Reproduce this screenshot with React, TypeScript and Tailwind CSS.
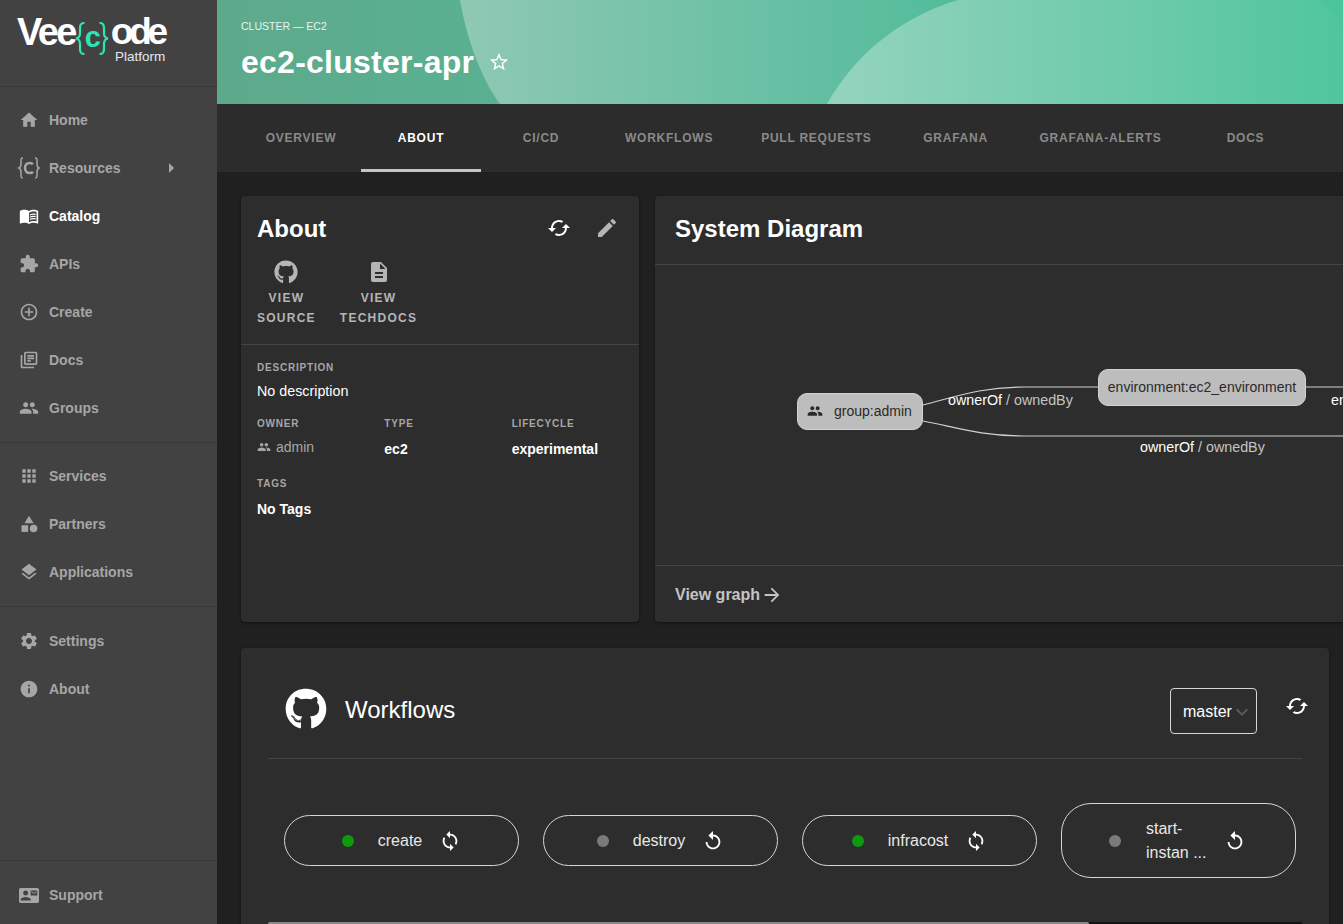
import type { ReactNode } from "react";
import { FaGithub } from "react-icons/fa";
import {
  MdAddCircleOutline,
  MdApps,
  MdArrowForward,
  MdArrowRight,
  MdCached,
  MdCategory,
  MdContactMail,
  MdDescription,
  MdEdit,
  MdExpandMore,
  MdExtension,
  MdHome,
  MdInfo,
  MdLayers,
  MdMenuBook,
  MdOutlineLibraryBooks,
  MdPeople,
  MdReplay,
  MdSettings,
  MdStarBorder,
  MdSync,
} from "react-icons/md";

const FONT = "font-['Liberation_Sans',Arial,sans-serif]";

function ResourcesIcon() {
  return (
    <svg viewBox="0 0 24 24" className="ml-[-2px] mr-[-2px] h-6 w-6 shrink-0" fill="none" stroke="currentColor" strokeWidth="1.5">
      <path d="M6 2C3.5 2 4 4 4 7s.2 4-2 5c2.2 1 2 2 2 5s-.5 5 2 5" />
      <path d="M18 2c2.5 0 2 2 2 5s-.2 4 2 5c-2.2 1-2 2-2 5s.5 5-2 5" />
      <path d="M16 8.2C15 7.2 13.8 7 12.6 7 9.800 7 8 9.200 8 12s1.800 5 4.600 5c1.200 0 2.400-.2 3.400-1.200" strokeWidth="2.600" />
    </svg>
  );
}

function Brace({ flip }: { flip?: boolean }) {
  return (
    <svg viewBox="0 0 10 33" className={`mt-[12px] h-[33px] w-[10px] shrink-0 ${flip ? "-scale-x-100" : ""}`} fill="none" stroke="#2ce5b5" strokeWidth="2.200">
      <path d="M9.500 1C5.500 1 5 3 5 7v4c0 3-1 5-4 5.500C4 17 5 19 5 22v4c0 4 .5 6 4.500 6" />
    </svg>
  );
}

function NavItem({ icon, label, active, arrow }: { icon: ReactNode; label: string; active?: boolean; arrow?: boolean }) {
  return (
    <div className={`flex h-12 items-center gap-[10px] pl-[19px] text-sm font-bold ${active ? "text-white" : "text-[#a6a6a6]"}`}>
      <span className="flex w-5 shrink-0 justify-center text-[20px]">{icon}</span>
      <span>{label}</span>
      {arrow && <MdArrowRight className="absolute left-[159px] text-2xl" />}
    </div>
  );
}

function Sidebar() {
  return (
    <aside className="flex h-full w-[217px] shrink-0 flex-col bg-[#424242]">
      <div className="h-[87px] shrink-0 border-b border-[#383838] pl-[17px] pt-[12px]">
        <div className="flex h-[40px] items-center text-[38px] font-bold leading-none text-white">
          <span className="leading-[30px] tracking-[-2.6px]">Vee</span>
          <Brace />
          <span className="mt-[10px] text-[29px] leading-[20px] text-[#2ce5b5]">c</span>
          <span className="ml-[-2px]">
            <Brace flip />
          </span>
          <span className="ml-[2px] text-[37px] leading-[30px] tracking-[-4.3px]">ode</span>
        </div>
        <div className="ml-[98px] mt-[-3px] text-[13.500px] leading-4 text-[#e8e8e8]">Platform</div>
      </div>
      <nav className="relative pt-[9px]">
        <NavItem icon={<MdHome />} label="Home" />
        <NavItem icon={<ResourcesIcon />} label="Resources" arrow />
        <NavItem icon={<MdMenuBook />} label="Catalog" active />
        <NavItem icon={<MdExtension />} label="APIs" />
        <NavItem icon={<MdAddCircleOutline />} label="Create" />
        <NavItem icon={<MdOutlineLibraryBooks />} label="Docs" />
        <NavItem icon={<MdPeople />} label="Groups" />
      </nav>
      <div className="mt-[10px] border-t border-[#383838] pt-[9px]">
        <NavItem icon={<MdApps />} label="Services" />
        <NavItem icon={<MdCategory />} label="Partners" />
        <NavItem icon={<MdLayers />} label="Applications" />
      </div>
      <div className="mt-[10px] border-t border-[#383838] pt-[10px]">
        <NavItem icon={<MdSettings />} label="Settings" />
        <NavItem icon={<MdInfo />} label="About" />
      </div>
      <div className="mt-auto border-t border-[#383838] pb-[5px] pt-[10px]">
        <NavItem icon={<MdContactMail className="text-[23px]" />} label="Support" />
      </div>
    </aside>
  );
}

function Header() {
  return (
    <header className="relative h-[104px] shrink-0 overflow-hidden bg-gradient-to-r from-[#5ea98c] via-[#54b898] to-[#4cc59c] pl-6 pt-[19px] text-white">
      {/* wave backdrop of the page theme */}
      <svg className="absolute inset-0 h-full w-full" viewBox="0 0 1126 104" preserveAspectRatio="none">
        <defs>
          <linearGradient id="waveA" x1="0" x2="1" y1="0" y2="0">
            <stop offset="0" stopColor="#fff" stopOpacity="0.32" />
            <stop offset="1" stopColor="#fff" stopOpacity="0" />
          </linearGradient>
          <linearGradient id="waveB" x1="0" x2="1" y1="0" y2="0">
            <stop offset="0" stopColor="#fff" stopOpacity="0.38" />
            <stop offset="1" stopColor="#fff" stopOpacity="0.02" />
          </linearGradient>
        </defs>
        <path d="M243 0C250 40 265 80 283 104H610C640 50 690 15 741 0Z" fill="url(#waveA)" />
        <path d="M610 104C640 50 690 15 741 0H1103C1110 8 1120 20 1126 30V104Z" fill="url(#waveB)" />
      </svg>
      <div className="relative">
        <div className="text-[10.500px] leading-[14px] text-[#e6f5ef]">CLUSTER — EC2</div>
        <div className="mt-[9px] flex items-center gap-[14px]">
          <h1 className="text-[32px] font-bold leading-[40px] tracking-[0.25px]">ec2-cluster-apr</h1>
          <MdStarBorder className="text-[22px]" />
        </div>
      </div>
    </header>
  );
}

const TABS = ["Overview", "About", "CI/CD", "Workflows", "Pull Requests", "Grafana", "Grafana-alerts", "Docs"];

function Tabs() {
  return (
    <div className="flex h-[68px] shrink-0 bg-[#2c2c2c] pl-6">
      {TABS.map((tab) => (
        <div
          key={tab}
          className={`flex min-w-[120px] items-center justify-center border-b-[3px] px-6 pt-[3px] text-xs font-bold uppercase tracking-[0.76px] ${
            tab === "About" ? "border-[#c4c4c4] text-white" : "border-transparent text-[#8a8a8a]"
          }`}
        >
          {tab}
        </div>
      ))}
    </div>
  );
}

function Meta({ label, children, className }: { label: string; children: ReactNode; className?: string }) {
  return (
    <div className={className}>
      <div className="text-[10px] font-bold uppercase leading-4 tracking-[0.8px] text-[#a6a6a6]">{label}</div>
      <div className="mt-[5px] text-sm leading-5">{children}</div>
    </div>
  );
}

function AboutCard() {
  return (
    <section className="h-[426px] w-[398px] shrink-0 rounded bg-[#2d2d2d] text-white shadow-[0_1px_3px_rgba(0,0,0,0.5)]">
      <div className="h-[149px] border-b border-[#444] px-4 pt-[17px]">
        <div className="flex h-8 items-center justify-between">
          <h2 className="text-2xl font-bold leading-8">About</h2>
          <div className="mr-[4px] mt-[-2px] flex gap-6 text-2xl">
            <MdCached />
            <MdEdit className="text-[#b5b5b5]" />
          </div>
        </div>
        <div className="mt-[15px] flex gap-6 text-xs font-bold uppercase leading-5 tracking-[1.25px] text-[#b5b5b5]">
          <div className="flex flex-col items-center text-center">
            <FaGithub className="mb-[4px] text-2xl" />
            <span>View</span>
            <span>Source</span>
          </div>
          <div className="flex flex-col items-center text-center">
            <MdDescription className="mb-[4px] text-2xl" />
            <span>View</span>
            <span>Techdocs</span>
          </div>
        </div>
      </div>
      <div className="px-4 pt-[15px]">
        <Meta label="Description">
          <span className="text-[14.300px]">No description</span>
        </Meta>
        <div className="mt-[15px] grid w-[382px] grid-cols-3">
          <Meta label="Owner">
            <span className="flex items-center gap-[5px] text-[#a6a6a6]">
              <MdPeople className="text-[14px]" /> admin
            </span>
          </Meta>
          <Meta label="Type">
            <span className="relative top-[2px] font-bold">ec2</span>
          </Meta>
          <Meta label="Lifecycle">
            <span className="relative top-[2px] font-bold">experimental</span>
          </Meta>
        </div>
        <Meta label="Tags" className="mt-[19px]">
          <span className="relative top-[2px] font-bold">No Tags</span>
        </Meta>
      </div>
    </section>
  );
}

function DiagramCanvas() {
  return (
    <div className="relative h-[300px] overflow-hidden text-[14.300px]">
      {/* canvas origin is x 655, y 265 on the page */}
      <svg className="absolute inset-0 h-full w-full" fill="none" stroke="#d0d0d0" strokeWidth="1.2">
        <path d="M268 140C300 132 325 122 370 122H443" />
        <path d="M651 122H700" />
        <path d="M268 156C300 162 325 171 370 171H700" />
      </svg>
      <div className="absolute left-[142px] top-[128px] flex h-[37px] w-[126px] items-center gap-[11px] rounded-[10px] border border-[#d2d2d2] bg-[#bdbdbd] pb-[1px] pl-[9px] text-[#2a2a2a]">
        <MdPeople className="text-base" />
        <span className="text-sm">group:admin</span>
      </div>
      <div className="absolute left-[443px] top-[104px] flex h-[37px] w-[208px] items-center justify-center rounded-[10px] border border-[#d2d2d2] bg-[#bdbdbd] pb-[2px] text-sm text-[#2a2a2a]">
        environment:ec2_environment
      </div>
      <div className="absolute left-[293px] top-[125px] leading-5 text-white">
        ownerOf <span className="text-[#c4c4c4]">/ ownedBy</span>
      </div>
      <div className="absolute left-[485px] top-[172px] leading-5 text-white">
        ownerOf <span className="text-[#c4c4c4]">/ ownedBy</span>
      </div>
      <div className="absolute left-[676px] top-[125px] leading-5 text-white">en</div>
    </div>
  );
}

function DiagramCard() {
  return (
    <section className="h-[426px] w-[900px] shrink-0 rounded bg-[#2d2d2d] text-white shadow-[0_1px_3px_rgba(0,0,0,0.5)]">
      <div className="flex h-[69px] items-center border-b border-[#444] pb-[2px] pl-5">
        <h2 className="text-2xl font-bold leading-8">System Diagram</h2>
      </div>
      <DiagramCanvas />
      <div className="flex h-[57px] items-center gap-[1px] border-t border-[#444] pl-5 pt-[2px] text-base font-bold text-[#c4c4c4]">
        View graph <MdArrowForward className="text-[22px]" />
      </div>
    </section>
  );
}

function WorkflowButton({ name, ok, lines }: { name: string; ok?: boolean; lines?: string[] }) {
  const tall = Boolean(lines);
  return (
    <div
      className={`flex w-[235px] items-center justify-center border border-[#d6d6d6] text-base text-[#e8e8e8] ${
        tall ? "h-[75px] rounded-[30px]" : "h-[51px] rounded-[25.500px]"
      }`}
    >
      <span className={`h-3 w-3 rounded-full ${ok ? "bg-[#0d9a0d]" : "bg-[#7a7a7a]"}`} />
      <span className={`ml-[24px] pt-[1px] leading-6 ${tall ? "w-[70px] pl-[1px] text-left" : ""}`}>
        {lines ? lines.map((line) => <div key={line}>{line}</div>) : name}
      </span>
      {ok ? (
        <MdSync className="ml-[17px] text-[22px] text-white" />
      ) : (
        <MdReplay className={`${tall ? "ml-[9px] mr-[2px]" : "ml-[17px]"} text-[22px] text-white`} />
      )}
    </div>
  );
}

function WorkflowsCard() {
  return (
    <section className="mt-[26px] h-[300px] w-[1088px] shrink-0 rounded bg-[#2d2d2d] px-[27px] text-white shadow-[0_1px_3px_rgba(0,0,0,0.5)]">
      <div className="flex h-[111px] items-start border-b border-[#444] pt-[40px]">
        <FaGithub className="ml-[17px] text-[42px]" />
        <h2 className="ml-[18px] mt-[6px] text-2xl leading-8">Workflows</h2>
        <div className="ml-auto mr-[28px] flex h-[46px] w-[87px] items-center rounded border border-[#d6d6d6] pl-3 pt-[2px] text-base">
          master
          <MdExpandMore className="ml-[-2px] shrink-0 text-2xl text-[#5a5a5a]" />
        </div>
        <MdCached className="mr-[-7px] mt-[6px] text-2xl" />
      </div>
      <div className="flex h-[163px] items-center gap-6 pl-[16px]">
        <WorkflowButton name="create" ok />
        <WorkflowButton name="destroy" />
        <WorkflowButton name="infracost" ok />
        <WorkflowButton name="start-instan" lines={["start-", "instan ..."]} />
      </div>
      <div className="h-[3px] bg-[#141414]">
        <div className="h-full w-[821px] rounded-sm bg-[#8a8a8a]" />
      </div>
    </section>
  );
}

export default function App() {
  return (
    <div className={`flex h-screen w-screen overflow-hidden bg-[#202020] ${FONT}`}>
      <Sidebar />
      <main className="flex min-w-0 flex-1 flex-col">
        <Header />
        <Tabs />
        <div className="min-h-0 flex-1 overflow-hidden pl-6 pt-6">
          <div className="flex gap-4">
            <AboutCard />
            <DiagramCard />
          </div>
          <WorkflowsCard />
        </div>
      </main>
    </div>
  );
}
